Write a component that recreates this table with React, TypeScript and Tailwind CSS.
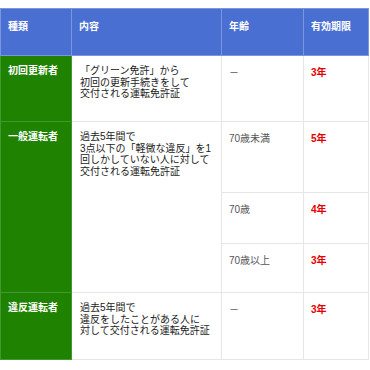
import React from "react";

const font = { fontFamily: '"Liberation Sans", "Noto Sans CJK JP", sans-serif' };

const th = "border border-[#7b95de] bg-[#4a6fd3] text-left align-top px-[7px] pt-[10px] text-[10px] font-bold text-white";
const kind = "border border-[#3f9a2e] bg-[#1f8200] align-top px-[7px] pt-[9px] text-[10px] font-bold text-white leading-[12px]";
const body = "border border-[#e6e6e6] align-top px-[8px] pt-[9px] text-[10px] leading-[11.5px] text-[#1a1a1a]";
const age = "border border-[#e6e6e6] align-top px-[7px] pt-[9px] text-[10px] text-[#555]";
const term = "border border-[#e6e6e6] align-top px-[7px] pt-[9px] text-[10px] font-bold text-[#e50000]";

export default function App() {
  return (
    <div className="w-[370px] h-[370px] bg-white pt-[8px]" style={font}>
      <table className="table-fixed border-collapse w-[368px]">
        <colgroup>
          <col className="w-[71px]" />
          <col className="w-[150px]" />
          <col className="w-[82px]" />
          <col className="w-[65px]" />
        </colgroup>
        <thead>
          <tr className="h-[47px]">
            <th className={th}>種類</th>
            <th className={th}>内容</th>
            <th className={th}>年齢</th>
            <th className={th}>有効期限</th>
          </tr>
        </thead>
        <tbody>
          <tr className="h-[66px]">
            <td className={kind}>初回更新者</td>
            <td className={body}>
              「グリーン免許」から<br />
              初回の更新手続きをして<br />
              交付される運転免許証
            </td>
            <td className={age}>－</td>
            <td className={term}>3年</td>
          </tr>
          <tr className="h-[71px]">
            <td rowSpan={3} className={kind}>一般運転者</td>
            <td rowSpan={3} className={body}>
              過去5年間で<br />
              3点以下の「軽微な違反」を1<br />
              回しかしていない人に対して<br />
              交付される運転免許証
            </td>
            <td className={age}>70歳未満</td>
            <td className={term}>5年</td>
          </tr>
          <tr className="h-[51px]">
            <td className={age}>70歳</td>
            <td className={term}>4年</td>
          </tr>
          <tr className="h-[49px]">
            <td className={age}>70歳以上</td>
            <td className={term}>3年</td>
          </tr>
          <tr className="h-[67px]">
            <td className={kind}>違反運転者</td>
            <td className={body}>
              過去5年間で<br />
              違反をしたことがある人に<br />
              対して交付される運転免許証
            </td>
            <td className={age}>－</td>
            <td className={term}>3年</td>
          </tr>
        </tbody>
      </table>
    </div>
  );
}
